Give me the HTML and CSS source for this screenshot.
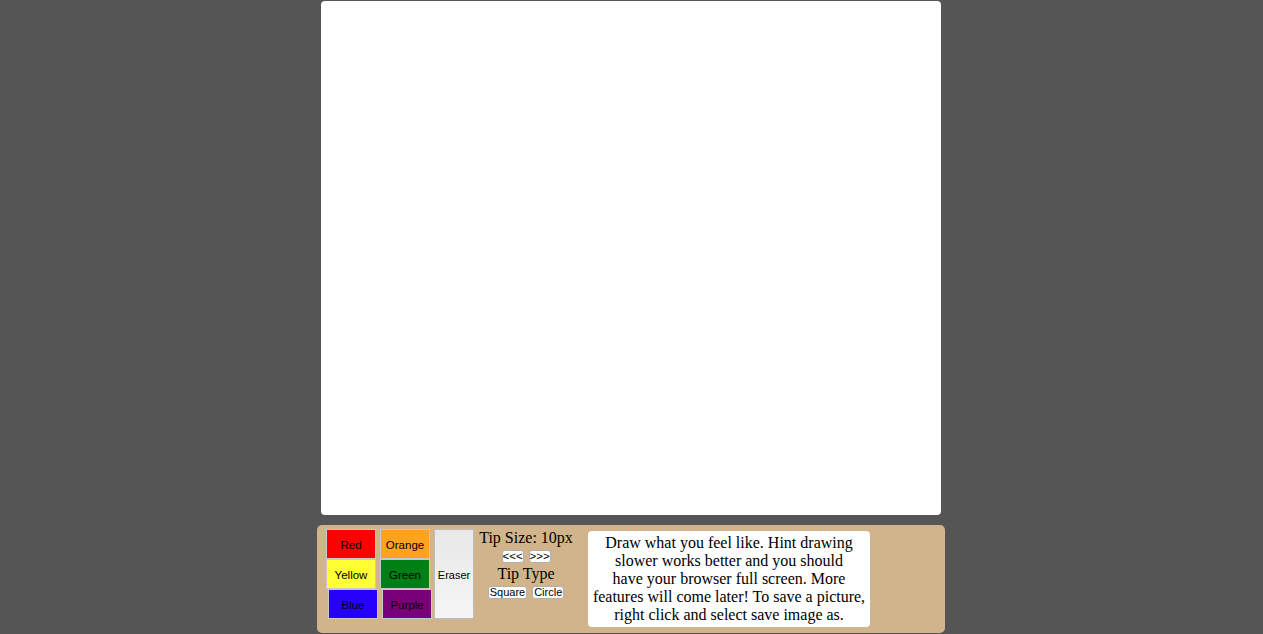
FILE: index.html
```html
<!DOCTYPE html>
<html>
<head>
<meta charset="utf-8">
<link rel="stylesheet" href="styles.css">
</head>
<body>
<div class="page">
  <div class="canvas"></div>
  <div class="toolbar">
    <div class="colors">
      <div class="row">
        <button class="cbtn red">Red</button>
        <button class="cbtn orange">Orange</button>
      </div>
      <div class="row">
        <button class="cbtn yellow">Yellow</button>
        <button class="cbtn green">Green</button>
      </div>
      <div class="row shifted">
        <button class="cbtn blue">Blue</button>
        <button class="cbtn purple">Purple</button>
      </div>
    </div>
    <button class="eraser">Eraser</button>
    <div class="tip">
      <div class="label">Tip Size: 10px</div>
      <div class="btns">
        <button class="sbtn arrows">&lt;&lt;&lt;</button>
        <button class="sbtn arrows">&gt;&gt;&gt;</button>
      </div>
      <div class="label">Tip Type</div>
      <div class="btns">
        <button class="sbtn">Square</button>
        <button class="sbtn">Circle</button>
      </div>
    </div>
    <div class="hint">Draw what you feel like. Hint drawing<br>slower works better and you should<br>have your browser full screen. More<br>features will come later! To save a picture,<br>right click and select save image as.</div>
  </div>
</div>
</body>
</html>
```
FILE: styles.css
```css
html, body {
  margin: 0;
  padding: 0;
  background: #555555;
  height: 100%;
}
.page {
  width: 1262px;
  display: flex;
  flex-direction: column;
  align-items: center;
  padding-top: 1px;
}
.canvas {
  width: 620px;
  height: 514px;
  background: #ffffff;
  border-radius: 4px;
}
.toolbar {
  margin-top: 10px;
  width: 628px;
  height: 108px;
  box-sizing: border-box;
  background: #d2b48c;
  border-radius: 5px;
  display: flex;
  align-items: flex-start;
  padding: 4px 0 0 9px;
}
.colors {
  display: flex;
  flex-direction: column;
}
.row {
  display: flex;
  gap: 4px;
}
.row.shifted {
  margin-left: 2px;
}
button {
  font-family: "Liberation Sans", Arial, sans-serif;
  font-size: 11px;
  color: #000;
  margin: 0;
  padding: 0;
  cursor: default;
}
.cbtn {
  width: 50px;
  height: 30px;
  border: 1px solid #c8c8c8;
  box-sizing: border-box;
  font-size: 11.5px;
  padding-top: 2px;
}
.red { background: #ff0000; }
.orange { background: #ffa31f; }
.yellow { background: #ffff33; }
.green { background: #008014; }
.blue { background: #2600ff; }
.purple { background: #780078; }
.eraser {
  margin-left: 2px;
  width: 40px;
  height: 90px;
  box-sizing: border-box;
  border: 1px solid #bdbdbd;
  background: linear-gradient(#e8e8e8, #f5f5f5);
  padding-top: 2px;
}
.tip {
  width: 96px;
  margin-left: 4px;
  display: flex;
  flex-direction: column;
  align-items: center;
  font-family: "Liberation Serif", "Times New Roman", serif;
  font-size: 16px;
  color: #000;
}
.label {
  line-height: 18px;
}
.btns {
  display: flex;
  gap: 5px;
  height: 18px;
  align-items: flex-start;
  padding-top: 3px;
  box-sizing: border-box;
}
.sbtn {
  background: #ffffff;
  border: 1px solid #b0b0b0;
  border-radius: 3px;
  height: 13px;
  line-height: 11px;
  padding: 0 1px;
  font-size: 11px;
}
.sbtn.arrows {
  width: 22px;
  font-size: 11.5px;
  padding: 0;
}
.hint {
  margin-left: 14px;
  margin-top: 2px;
  width: 282px;
  height: 96px;
  box-sizing: border-box;
  background: #ffffff;
  border-radius: 4px;
  font-family: "Liberation Serif", "Times New Roman", serif;
  font-size: 16px;
  line-height: 18px;
  text-align: center;
  padding: 3px 0 0;
  color: #000;
  white-space: nowrap;
}
```
